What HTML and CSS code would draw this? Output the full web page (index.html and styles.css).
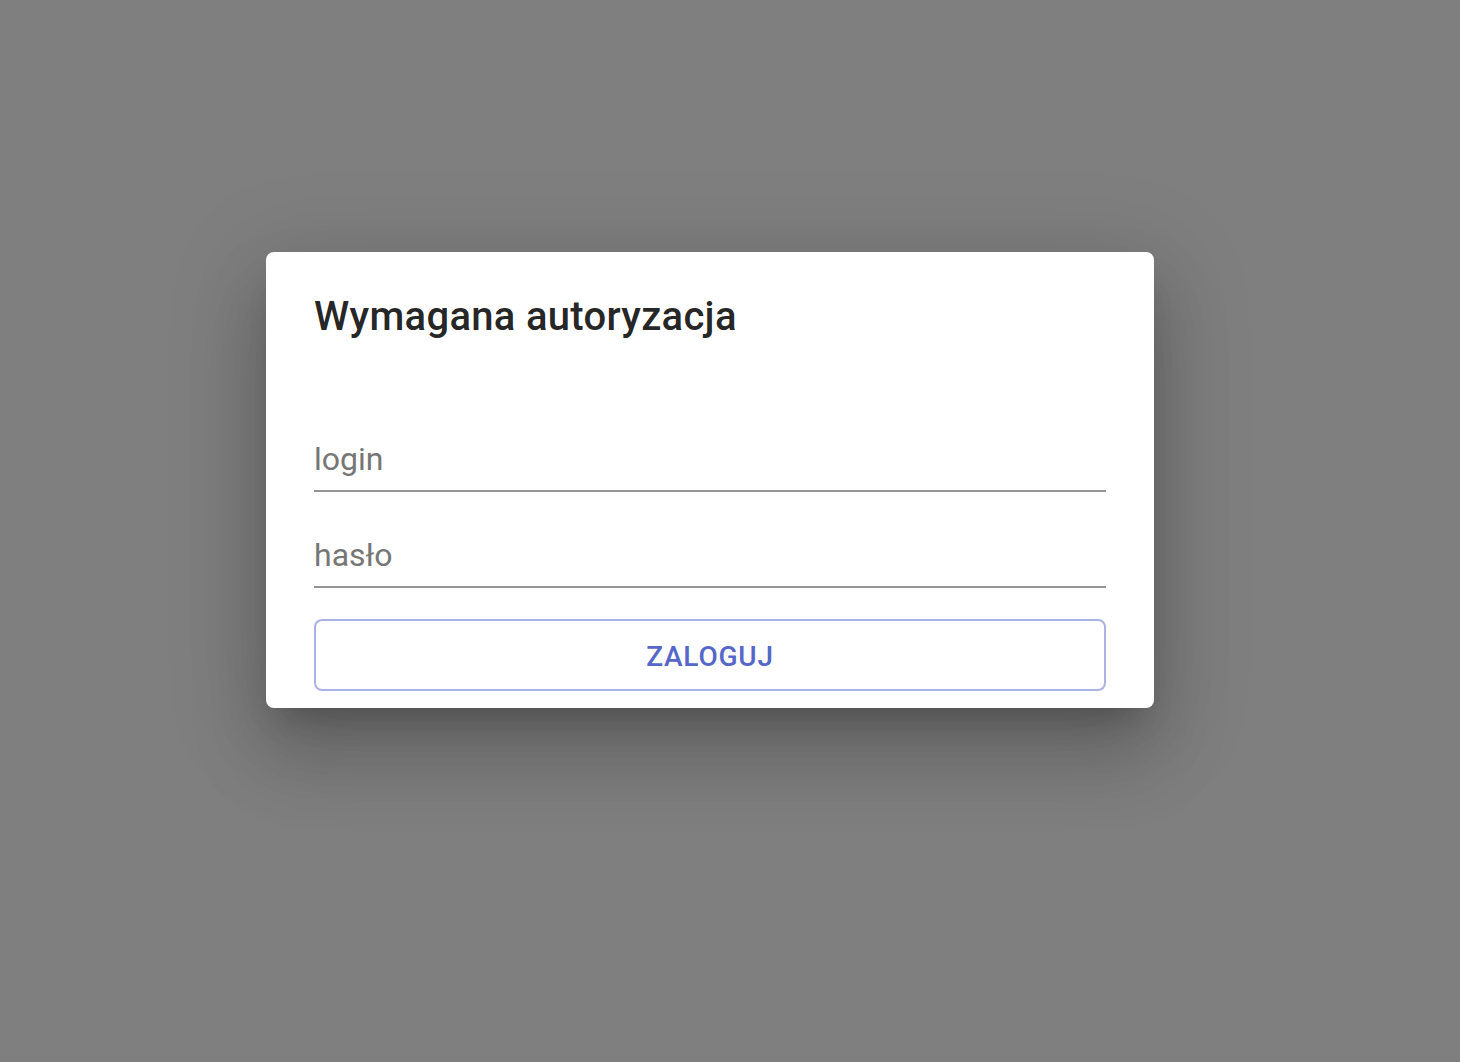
FILE: index.html
```html
<!DOCTYPE html>
<html lang="pl">
<head>
<meta charset="utf-8">
<title>Wymagana autoryzacja</title>
<link rel="stylesheet" href="styles.css">
</head>
<body>
<div class="backdrop">
  <div class="dialog" role="dialog">
    <h2 class="dialog-title">Wymagana autoryzacja</h2>
    <form class="dialog-content">
      <div class="field">
        <input class="field-input" type="text" placeholder="login">
      </div>
      <div class="field">
        <input class="field-input" type="password" placeholder="hasło">
      </div>
      <button class="btn-outlined" type="button">Zaloguj</button>
    </form>
  </div>
</div>
</body>
</html>
```
FILE: styles.css
```css
html, body {
  margin: 0;
  padding: 0;
  height: 100%;
}
body {
  font-family: Roboto, "Noto Sans", sans-serif;
  background: #ffffff;
}
.backdrop {
  box-sizing: border-box;
  min-height: 100vh;
  background: rgba(0, 0, 0, 0.5);
  display: flex;
  align-items: flex-start;
  padding: 252px 0 0 266px;
}
.dialog {
  width: 888px;
  background: #ffffff;
  border-radius: 8px;
  box-shadow: 0 22px 30px -14px rgba(0, 0, 0, 0.2),
              0 48px 76px 6px rgba(0, 0, 0, 0.14),
              0 18px 92px 16px rgba(0, 0, 0, 0.12);
}
.dialog-title {
  margin: 0;
  padding: 33px 48px 31px;
  font-size: 40px;
  font-weight: 500;
  line-height: 64px;
  letter-spacing: 0.0075em;
  color: rgba(0, 0, 0, 0.87);
}
.dialog-content {
  margin: 0;
  padding: 16px 48px 17px;
}
.field {
  margin: 31px 0 16px;
  border-bottom: 2px solid rgba(0, 0, 0, 0.42);
}
.field-input {
  display: block;
  width: 100%;
  box-sizing: content-box;
  border: 0;
  outline: 0;
  background: transparent;
  margin: 0;
  padding: 13px 0 12px;
  height: 38px;
  font-family: Roboto, "Noto Sans", sans-serif;
  font-size: 32px;
  color: rgba(0, 0, 0, 0.87);
}
.field-input::placeholder {
  color: #767676;
  opacity: 1;
}
.btn-outlined {
  display: block;
  width: 100%;
  box-sizing: border-box;
  margin: 31px 0 0;
  padding: 11px 30px 8px;
  border: 2px solid rgba(86, 104, 202, 0.5);
  border-radius: 8px;
  background: #ffffff;
  color: #5567c9;
  font-family: Roboto, "Noto Sans", sans-serif;
  font-size: 28px;
  font-weight: 500;
  line-height: 49px;
  letter-spacing: 0.02857em;
  text-transform: uppercase;
  cursor: pointer;
}
```
